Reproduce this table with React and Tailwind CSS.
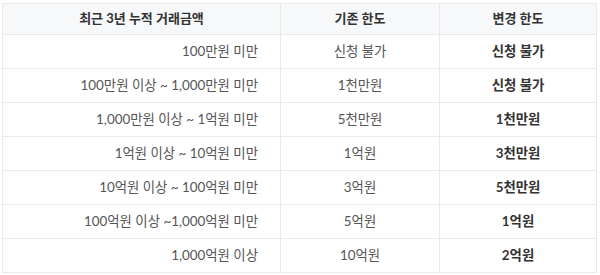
export default function App() {
  const rows = [
    ["100만원 미만", "신청 불가", "신청 불가"],
    ["100만원 이상 ~ 1,000만원 미만", "1천만원", "신청 불가"],
    ["1,000만원 이상 ~ 1억원 미만", "5천만원", "1천만원"],
    ["1억원 이상 ~ 10억원 미만", "1억원", "3천만원"],
    ["10억원 이상 ~ 100억원 미만", "3억원", "5천만원"],
    ["100억원 이상 ~1,000억원 미만", "5억원", "1억원"],
    ["1,000억원 이상", "10억원", "2억원"],
  ];
  return (
    <div
      className="w-[600px] h-[275px] bg-white pt-[3px] pl-[2px]"
      style={{ fontFamily: "Lato, 'Noto Sans CJK KR', sans-serif" }}
    >
      <table className="w-[594px] border-collapse text-[13.4px] table-fixed">
        <colgroup>
          <col className="w-[278px]" />
          <col className="w-[159px]" />
          <col className="w-[157px]" />
        </colgroup>
        <thead>
          <tr className="h-[31px] bg-[#f7f8fa]">
            <th className="border border-[#e9e9e9] font-bold text-[13px] text-[#333] text-center">최근 3년 누적 거래금액</th>
            <th className="border border-[#e9e9e9] font-bold text-[13px] text-[#333] text-center">기존 한도</th>
            <th className="border border-[#e9e9e9] font-bold text-[13px] text-[#333] text-center">변경 한도</th>
          </tr>
        </thead>
        <tbody>
          {rows.map((r, i) => (
            <tr key={i} className="h-[34px]">
              <td className="border border-[#e9e9e9] text-right pr-[22px] text-[#555]">{r[0]}</td>
              <td className="border border-[#e9e9e9] text-center text-[#555]">{r[1]}</td>
              <td className="border border-[#e9e9e9] text-center font-bold text-[#333]">{r[2]}</td>
            </tr>
          ))}
        </tbody>
      </table>
    </div>
  );
}
